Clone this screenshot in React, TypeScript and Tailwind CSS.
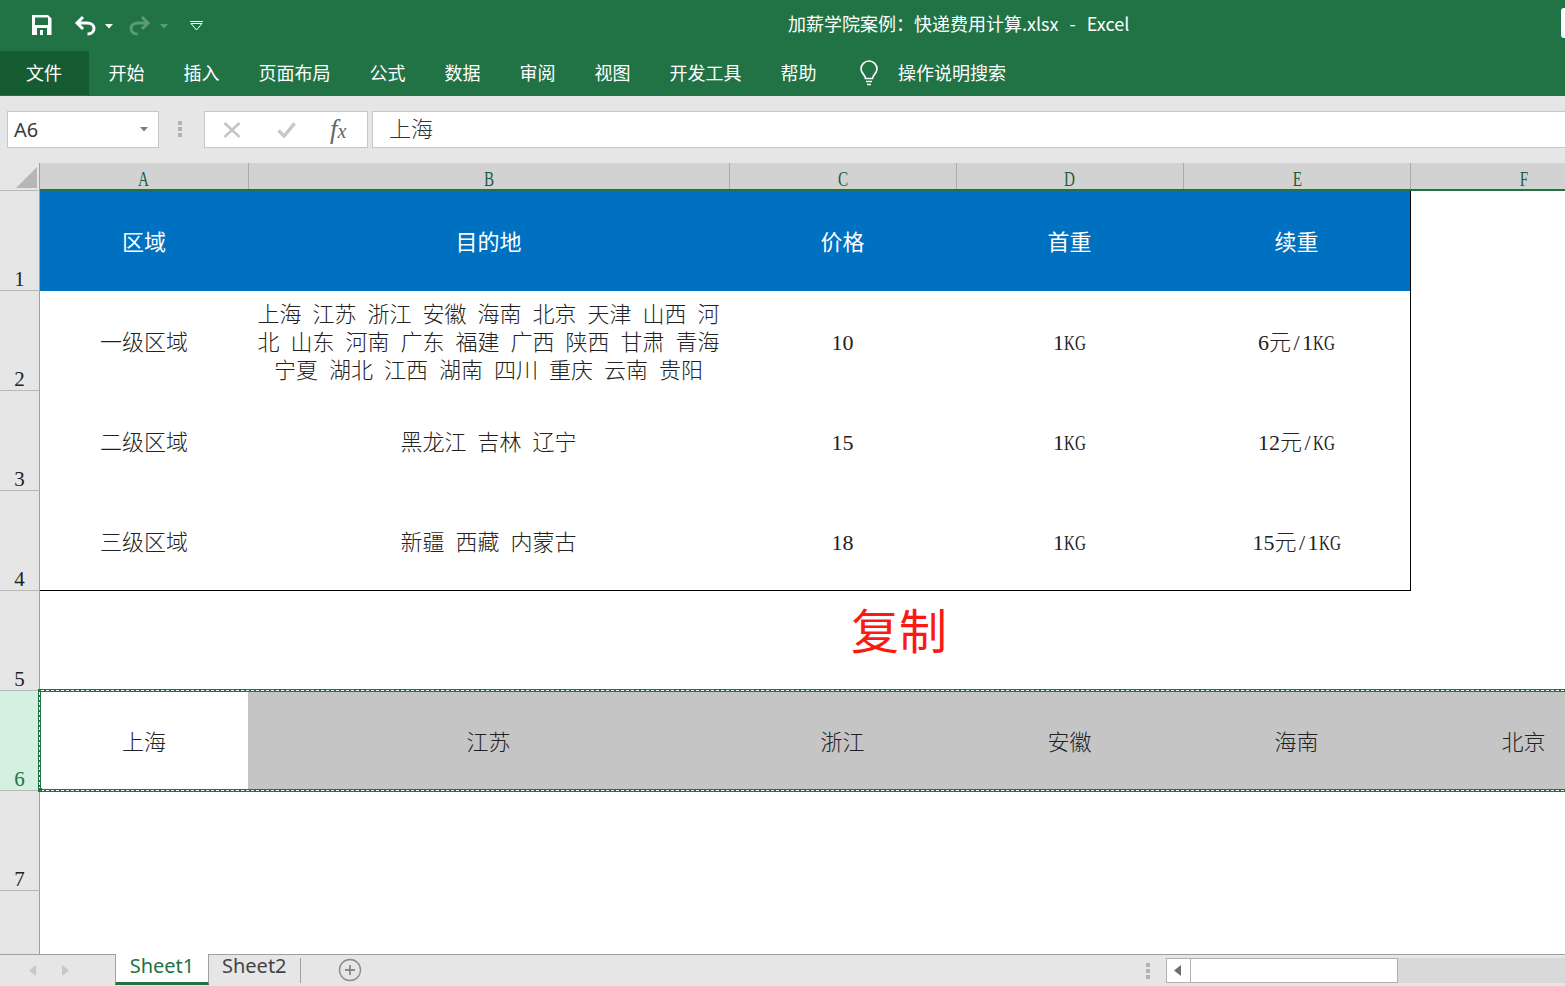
import React from "react";

const CJK = "font-['Liberation_Serif','Noto_Sans_CJK_SC',serif]";
const UI = "font-['Noto_Sans_CJK_SC','Noto_Sans',sans-serif]";
const COLS = "grid grid-cols-[208px_481px_227px_227px_227px_227px] w-[1597px] shrink-0";

const tabs = ["开始", "插入", "页面布局", "公式", "数据", "审阅", "视图", "开发工具", "帮助"];

function Caret({ dim }: { dim?: boolean }) {
  return (
    <svg width="8" height="5" viewBox="0 0 8 5" className="shrink-0">
      <path d="M0 0H8L4 4.5Z" fill={dim ? "#5d9a7a" : "#ffffff"} />
    </svg>
  );
}

function Dots() {
  return (
    <div className="flex flex-col gap-[2px]">
      <span className="h-[4px] w-[4px] bg-[#b3b3b3]" />
      <span className="h-[4px] w-[4px] bg-[#b3b3b3]" />
      <span className="h-[4px] w-[4px] bg-[#b3b3b3]" />
    </div>
  );
}

function TitleBar() {
  return (
    <div className="flex h-[51px] items-center pb-[1px] text-white">
      <svg width="20" height="20" viewBox="0 0 20 20" className="ml-[32px] shrink-0">
        <path d="M0 0H16L19.5 3.5V20H0Z" fill="#fff" />
        <rect x="3" y="2.5" width="13" height="7.5" fill="#217346" />
        <rect x="5" y="13" width="10" height="7" fill="#217346" />
        <rect x="8" y="15" width="3" height="5" fill="#fff" />
      </svg>
      <svg width="22" height="21" viewBox="0 0 22 21" fill="none" stroke="#fff" strokeWidth="3" className="ml-[22px] shrink-0">
        <path d="M9 2L3 8L9 14M3 8H13C17.5 8 20 10.5 20 13.5C20 16.5 17.5 19 13.5 19" />
      </svg>
      <span className="ml-[9px] mt-[2px] flex"><Caret /></span>
      <svg width="22" height="21" viewBox="0 0 22 21" fill="none" stroke="#5d9a7a" strokeWidth="3" className="ml-[16px] shrink-0">
        <path d="M13 2L19 8L13 14M19 8H9C4.500 8 2 10.500 2 13.500C2 16.500 4.500 19 8.500 19" />
      </svg>
      <span className="ml-[9px] mt-[2px] flex"><Caret dim /></span>
      <svg width="13" height="10" viewBox="0 0 13 10" fill="none" stroke="#fff" className="ml-[22px] mt-[2px] shrink-0">
        <path d="M0 .5H13M1 2.500H12L6.500 9Z" />
      </svg>
      <div className={`ml-[585px] -mt-[5px] whitespace-pre text-[18px] leading-[24px] [word-spacing:1.500px] ${UI}`}>加薪学院案例：快递费用计算.xlsx  -  Excel</div>
      <div className="ml-auto mt-2 h-[30px] w-1 self-start rounded-l-[3px] bg-white" />
    </div>
  );
}

function TabBar() {
  return (
    <div className={`flex h-[45px] items-start text-[18px] text-white ${UI}`}>
      <div className="flex h-[44px] w-[89px] items-center justify-center bg-[#165c33] pb-[2px] pr-[1px]">文件</div>
      {tabs.map((t) => (
        <div key={t} className="flex h-[44px] items-center px-[19.5px] pb-[2px] first:pl-[20px]">{t}</div>
      ))}
      <div className="ml-[23px] flex h-[44px] items-center gap-[19px]">
        <svg width="20" height="26" viewBox="0 0 20 26" fill="none" stroke="#fff" strokeWidth="1.6" className="shrink-0">
          <path d="M6.500 18.500C6.500 15 2 13.500 2 9A8 8 0 0 1 18 9C18 13.500 13.500 15 13.500 18.500Z" />
          <path d="M7 21.500H13M8 24.500H12" />
        </svg>
        <span className="-mt-[2px]">操作说明搜索</span>
      </div>
    </div>
  );
}

function FormulaBar() {
  return (
    <div className="flex h-[67px] items-start bg-[#e6e6e6] pt-[15px]">
      <div className="ml-[7px] flex h-[37px] w-[152px] items-center border border-[#c6c6c6] bg-white pl-[6px] pr-[10px]">
        <span className="flex-1 text-[20px] leading-none text-[#3a3a3a] font-['Noto_Sans',sans-serif]">A6</span>
        <svg width="8" height="5" viewBox="0 0 8 5"><path d="M0 0H8L4 4.500Z" fill="#7a7a7a" /></svg>
      </div>
      <div className="ml-[19px] mt-[10px]"><Dots /></div>
      <div className="ml-[22px] flex h-[37px] w-[164px] items-center border border-[#c6c6c6] bg-white pl-[18px]">
        <svg width="18" height="16" viewBox="0 0 18 16" fill="none" stroke="#c4c4c4" strokeWidth="2.400" className="shrink-0">
          <path d="M1.500 1L16.500 15M16.500 1L1.500 15" />
        </svg>
        <svg width="19" height="16" viewBox="0 0 20 17" fill="none" stroke="#c8c8c8" strokeWidth="3.600" className="ml-[36px] shrink-0">
          <path d="M1.500 9L7.500 15L18.500 1.500" />
        </svg>
        <span className="ml-[34px] flex items-baseline italic leading-none text-[#666] font-['Liberation_Serif',serif]">
          <span className="text-[27px]">f</span>
          <span className="text-[20px]">x</span>
        </span>
      </div>
      <div className="ml-[4px] flex h-[37px] flex-1 items-center border border-r-0 border-[#c6c6c6] bg-white pl-[16px]">
        <span className={`-mt-[5px] text-[22px] font-light leading-none text-[#333] ${UI}`}>上海</span>
      </div>
    </div>
  );
}

function ColHeader() {
  const cols = ["A", "B", "C", "D", "E", "F"];
  return (
    <div className="flex h-[28px]">
      <div className="relative h-[28px] w-10 shrink-0 border-b border-r border-b-[#b8b8b8] border-r-[#a0a0a0] bg-[#e6e6e6]">
        <svg width="21" height="21" viewBox="0 0 21 21" className="absolute left-[16px] top-[4px]">
          <path d="M21 0V21H0Z" fill="#b6b6b6" />
        </svg>
      </div>
      <div className={`${COLS} border-b-2 border-b-[#217346]`}>
        {cols.map((c, i) => (
          <div
            key={c}
            className={`flex h-[26px] items-end justify-center bg-[#d2d2d2] text-[21px] leading-[20px] text-[#1d5c3e] font-['Liberation_Serif',serif] ${i ? "border-l border-l-[#ababab]" : ""}`}
          >
            <span className="inline-block scale-x-[.72]">{c}</span>
          </div>
        ))}
      </div>
    </div>
  );
}

function RowHead({ n, active, tall }: { n?: number; active?: boolean; tall?: boolean }) {
  return (
    <div
      className={`flex w-10 shrink-0 items-end justify-center border-r border-r-[#a0a0a0] text-[21px] leading-[22px] font-['Liberation_Serif',serif] ${
        active ? "bg-[#d3f0e0] text-[#217346]" : "bg-[#e6e6e6] text-[#222]"
      } ${n ? "border-b border-b-[#b8b8b8]" : ""} ${tall ? "h-[63px]" : "h-[100px]"}`}
    >
      {n}
    </div>
  );
}

function Kg() {
  return (
    <span className="inline-block w-[22px] origin-left scale-x-[.72] whitespace-nowrap text-left text-[21px]">KG</span>
  );
}

function Cell({ children, className = "" }: { children?: React.ReactNode; className?: string }) {
  return (
    <div className={`flex h-[100px] items-center justify-center pt-[4px] text-center text-[22px] leading-[28px] ${className}`}>
      <div>{children}</div>
    </div>
  );
}

function Sheet() {
  const head = ["区域", "目的地", "价格", "首重", "续重"];
  const data: React.ReactNode[][] = [
    ["一级区域", "上海 江苏 浙江 安徽 海南 北京 天津 山西 河北 山东 河南 广东 福建 广西 陕西 甘肃 青海 宁夏 湖北 江西 湖南 四川 重庆 云南 贵阳", "10", <>1<Kg /></>, <>6元<span className="px-[2.500px]">/</span>1<Kg /></>],
    ["二级区域", "黑龙江 吉林 辽宁", "15", <>1<Kg /></>, <>12元<span className="px-[2.500px]">/</span><Kg /></>],
    ["三级区域", "新疆 西藏 内蒙古", "18", <>1<Kg /></>, <>15元<span className="px-[2.500px]">/</span>1<Kg /></>],
  ];
  const copied = ["上海", "江苏", "浙江", "安徽", "海南", "北京"];
  const hDash = "absolute left-0 right-0 h-px bg-[repeating-linear-gradient(90deg,#ffffff_0,#ffffff_3px,transparent_3px,transparent_5px)]";
  return (
    <div className={`flex-1 overflow-hidden bg-white font-light ${CJK}`}>
      <div className="flex">
        <RowHead n={1} />
        <div className={COLS}>
          {head.map((h) => (
            <Cell key={h} className="bg-[#0070c0] font-normal text-white">{h}</Cell>
          ))}
          <div className="border-l border-l-black" />
        </div>
      </div>
      {data.map((row, r) => (
        <div key={r} className="flex">
          <RowHead n={r + 2} />
          <div className={COLS}>
            {row.map((c, i) => (
              <Cell
                key={i}
                className={`text-[#222] ${i === 1 ? "[word-spacing:5.500px]" : ""} ${r === 2 ? "border-b border-b-black" : ""}`}
              >
                {c}
              </Cell>
            ))}
            <div className="border-l border-l-black" />
          </div>
        </div>
      ))}
      <div className="flex">
        <RowHead n={5} />
        <div className={`h-[100px] pl-[811px] pt-[9px] text-[48px] font-normal leading-[56px] text-[#fb1a12] ${UI}`}>复制</div>
      </div>
      <div className="relative flex">
        <RowHead n={6} active />
        <div className={COLS}>
          {copied.map((c, i) => (
            <Cell key={c} className={`text-[#222] ${i ? "bg-[#c5c5c5]" : "bg-white"}`}>{c}</Cell>
          ))}
        </div>
        <div className="pointer-events-none absolute -bottom-[1px] -right-[8px] -top-[2px] left-[38px] border-[3px] border-[#217346]">
          <div className={`${hDash} -top-[2px]`} />
          <div className={`${hDash} -bottom-[2px]`} />
          <div className="absolute -left-[2px] bottom-0 top-0 w-px bg-[repeating-linear-gradient(180deg,#ffffff_0,#ffffff_3px,transparent_3px,transparent_5px)]" />
        </div>
        <div className="absolute -bottom-[1px] left-[38px] h-[4px] w-[4px] bg-[#217346]" />
      </div>
      <div className="flex">
        <RowHead n={7} />
      </div>
      <div className="flex">
        <RowHead tall />
      </div>
    </div>
  );
}

function BottomBar() {
  return (
    <div className={`flex h-[32px] items-start border-t border-t-[#a0a0a0] bg-[#e6e6e6] ${UI}`}>
      <div className="ml-[29px] mt-[10px] flex items-center gap-[26px]">
        <svg width="7" height="11" viewBox="0 0 7 11"><path d="M7 0V11L0 5.500Z" fill="#c8c8c8" /></svg>
        <svg width="7" height="11" viewBox="0 0 7 11"><path d="M0 0V11L7 5.500Z" fill="#c8c8c8" /></svg>
      </div>
      <div className="-mt-px ml-[46px] flex h-[31px] w-[94px] items-start justify-center border-x border-b-[3px] border-x-[#a0a0a0] border-b-[#217346] bg-white text-[20px] leading-[24px] text-[#217346] font-['Noto_Sans',sans-serif]">
        Sheet1
      </div>
      <div className="ml-[13px] text-[20px] leading-[22px] text-[#444] font-['Noto_Sans',sans-serif]">Sheet2</div>
      <div className="ml-[13px] mt-[3px] h-[25px] w-px bg-[#a0a0a0]" />
      <svg width="24" height="24" viewBox="0 0 24 24" fill="none" stroke="#8a8a8a" className="ml-[37px] mt-[3px] shrink-0">
        <circle cx="12" cy="12" r="10.500" strokeWidth="1.300" />
        <path d="M12 7V17M7 12H17" strokeWidth="1.800" />
      </svg>
      <div className="ml-[784px] mt-[8px]"><Dots /></div>
      <div className="ml-[16px] mt-[3px] flex h-[25px] flex-1">
        <div className="flex h-[25px] w-[25px] items-center justify-center border border-[#b0b0b0] bg-white pr-[1px]">
          <svg width="7" height="11" viewBox="0 0 7 11"><path d="M7 0V11L0 5.500Z" fill="#6e6e6e" /></svg>
        </div>
        <div className="h-[25px] w-[207px] border border-l-0 border-[#b0b0b0] bg-white" />
        <div className="h-[25px] flex-1 bg-[#d9d9d9]" />
      </div>
    </div>
  );
}

export default function App() {
  return (
    <div className="flex h-[986px] w-[1565px] flex-col overflow-hidden bg-white">
      <div className="bg-[#217346]">
        <TitleBar />
        <TabBar />
      </div>
      <FormulaBar />
      <ColHeader />
      <Sheet />
      <BottomBar />
    </div>
  );
}
